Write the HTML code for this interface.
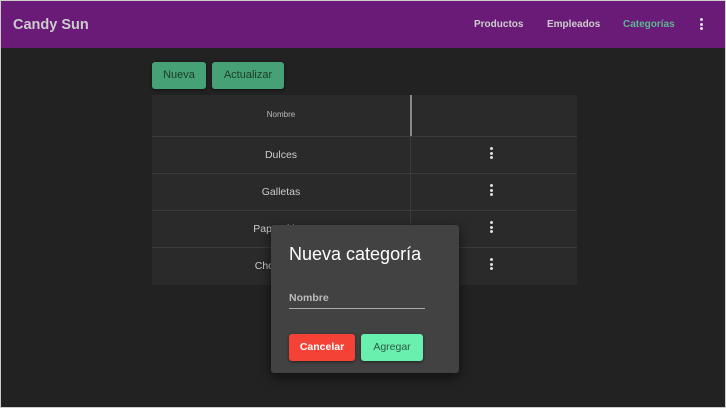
<!DOCTYPE html><html><head><style>
body{margin:0;width:726px;height:408px;background:#222;font-family:"Liberation Sans",sans-serif;position:relative;overflow:hidden}
.frame{position:absolute;left:0;top:0;width:724px;height:406px;border:1px solid #ccc;pointer-events:none}
.hdr{position:absolute;left:1px;top:1px;width:724px;height:47px;background:#6a1b78}
.t{position:absolute;white-space:nowrap}
.btn{position:absolute;background:#47a176;border-radius:3px;color:#1b3b2a;font-size:11px;text-align:center;box-shadow:0 1px 3px rgba(0,0,0,.5)}
.tbl{position:absolute;left:152px;top:95px;width:425px;height:190px;background:#2a2a2a}
.row{position:absolute;left:0;width:425px;border-top:1px solid #3a3a3a;color:#ccc;font-size:10.5px}
.dots{position:absolute;width:3px}
.dots i{display:block;width:3px;height:3px;background:#ddd;border-radius:50%;margin-bottom:1.5px}
</style></head><body>
<div class="hdr"></div>
<div class="t" style="left:13px;top:17px;font-size:14.5px;font-weight:bold;color:#ccc">Candy Sun</div>
<div class="t" style="left:474px;top:19px;font-size:10px;font-weight:bold;color:#ccc">Productos</div>
<div class="t" style="left:547px;top:19px;font-size:10px;font-weight:bold;color:#ccc">Empleados</div>
<div class="t" style="left:623px;top:19px;font-size:10px;font-weight:bold;color:#5fb592">Categorías</div>
<div class="dots" style="left:700px;top:18px"><i></i><i></i><i></i></div>
<div class="btn" style="left:152px;top:62px;width:54px;height:27px;line-height:27px">Nueva</div>
<div class="btn" style="left:212px;top:62px;width:72px;height:27px;line-height:27px">Actualizar</div>
<div class="tbl">
<div class="t" style="left:0;width:258px;top:15px;text-align:center;font-size:8px;color:#bbb">Nombre</div>
<div style="position:absolute;left:258px;top:0;width:1px;height:190px;background:#3a3a3a"></div>
<div style="position:absolute;left:258px;top:0;width:2px;height:41px;background:#888"></div>
<div class="row" style="top:41px;height:37px"><div class="t" style="width:258px;text-align:center;top:12px">Dulces</div><div class="dots" style="left:338px;top:10px"><i></i><i></i><i></i></div></div>
<div class="row" style="top:78px;height:37px"><div class="t" style="width:258px;text-align:center;top:12px">Galletas</div><div class="dots" style="left:338px;top:10px"><i></i><i></i><i></i></div></div>
<div class="row" style="top:115px;height:37px"><div class="t" style="width:258px;text-align:center;top:12px">Papas fritas</div><div class="dots" style="left:338px;top:10px"><i></i><i></i><i></i></div></div>
<div class="row" style="top:152px;height:37px"><div class="t" style="width:258px;text-align:center;top:12px">Chocolates</div><div class="dots" style="left:338px;top:10px"><i></i><i></i><i></i></div></div>
</div>
<div style="position:absolute;left:271px;top:225px;width:188px;height:148px;background:#424242;border-radius:3px;box-shadow:0 4px 12px rgba(0,0,0,.6)">
<div class="t" style="left:18px;top:19px;font-size:18px;color:#fff">Nueva categoría</div>
<div class="t" style="left:18px;top:67px;font-size:10.5px;font-weight:bold;color:#bbb">Nombre</div>
<div style="position:absolute;left:18px;top:83px;width:136px;height:1px;background:#aaa"></div>
<div class="btn" style="left:18px;top:109px;width:66px;height:27px;line-height:27px;background:#f44336;color:#fff;font-weight:bold;font-size:10.5px">Cancelar</div>
<div class="btn" style="left:90px;top:109px;width:62px;height:27px;line-height:27px;background:#69f0ae;color:#2d5a44;font-size:10.5px">Agregar</div>
</div>
<div class="frame"></div>
</body></html>
